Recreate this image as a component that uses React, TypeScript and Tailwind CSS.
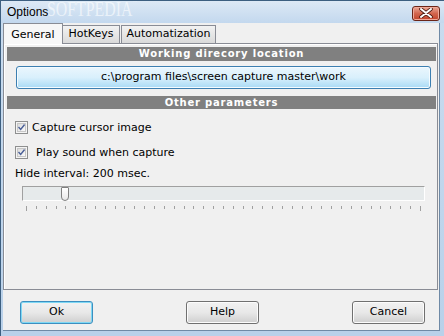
import React from "react";

function Check() {
  return (
    <div className="w-[13px] h-[13px] border border-[#8e8f8f] bg-[#f4f4f4] flex items-center justify-center shrink-0">
      <div className="w-[9px] h-[9px] border border-[#c7c7c7] bg-gradient-to-br from-[#dcdcdc] to-[#fafafa] flex items-center justify-center">
        <svg width="9" height="9" viewBox="0 0 9 9">
          <path d="M1.2 4.6 L3.4 7 L7.9 1.4" fill="none" stroke="#4a5f97" strokeWidth="1.8" strokeLinecap="square" />
        </svg>
      </div>
    </div>
  );
}

function Btn({ label, focus }: { label: string; focus?: boolean }) {
  return (
    <div
      className={
        "w-[73px] h-[23px] rounded-[3px] border flex items-center justify-center text-[11px] text-black " +
        (focus
          ? "border-[#3c8fc0] shadow-[inset_0_0_0_1px_#7fd8f4] bg-gradient-to-b from-[#f2f2f2] via-[#e8e8e8] to-[#cfcfcf]"
          : "border-[#707070] shadow-[inset_0_0_0_1px_#fcfcfc] bg-gradient-to-b from-[#f2f2f2] via-[#e8e8e8] to-[#cfcfcf]")
      }
    >
      {label}
    </div>
  );
}

export default function App() {
  const ticks = Array.from({ length: 41 }, (_, i) => i);
  return (
    <div className="w-[444px] h-[336px] relative overflow-hidden bg-gradient-to-b from-[#c9dcef] to-[#b9d1ea] border-l border-t border-[#3d5f80] flex flex-col font-['DejaVu_Sans',sans-serif] text-black">
      {/* title bar */}
      <div className="h-[22px] flex items-center pl-[6px] pr-[4px] bg-gradient-to-b from-[#dde9f5] to-[#c3d8ee] relative">
        <span className="text-[12px] font-['Liberation_Sans',sans-serif] text-black leading-none relative z-10">Options</span>
        <div className="absolute left-[46px] top-[-3px] origin-left scale-x-[0.72] text-[22px] font-['Liberation_Serif',serif] text-white/60 leading-none select-none whitespace-nowrap">
          SOFTPEDIA<span className="text-[6px] align-top">™</span>
        </div>
        <div className="ml-auto mt-[2px] w-[28px] h-[15px] rounded-[3px] border border-[#6a2518] bg-gradient-to-b from-[#e9a797] via-[#d2654e] to-[#c0422a] shadow-[inset_0_0_0_1px_#efa99a] flex items-center justify-center">
          <svg width="14" height="10" viewBox="0 0 14 10">
            <path d="M2 1 L12 9 M12 1 L2 9" stroke="#4a1a12" strokeWidth="3.6" strokeLinecap="round" />
            <path d="M2 1 L12 9 M12 1 L2 9" stroke="#ffffff" strokeWidth="2" strokeLinecap="round" />
          </svg>
        </div>
      </div>

      {/* client */}
      <div className="flex-1 flex pl-[2px] pr-[4px] pb-[5px]">
        <div className="flex-1 bg-[#f0f0f0] border-b border-r border-[#6f8aa6] flex flex-col pr-[1px] relative">
          {/* tabs */}
          <div className="h-[20px] flex items-end relative z-10">
            <div className="h-[21px] w-[60px] border border-b-0 border-[#898c95] bg-[#f7f7f7] -mb-px flex items-start justify-center pt-[3px] text-[11px]">
              General
            </div>
            <div className="h-[18px] w-[57px] border border-l-0 border-b-0 border-[#898c95] bg-gradient-to-b from-[#f2f2f2] to-[#dadada] flex items-center justify-center text-[11px]">
              HotKeys
            </div>
            <div className="h-[18px] w-[95px] ml-[1px] border border-b-0 border-[#898c95] bg-gradient-to-b from-[#f2f2f2] to-[#dadada] flex items-center justify-center text-[11px]">
              Automatization
            </div>
          </div>

          {/* panel */}
          <div className="h-[247px] border border-[#898c95] bg-[#f0f0f0] shadow-[inset_1px_1px_0_#ffffff] flex flex-col pt-[3px] pl-[3px] pr-[1px]">
            <div className="h-[14px] bg-[#808080] flex items-center justify-center text-white font-bold text-[10px] tracking-[0.8px] leading-none">
              Working direcory location
            </div>
            <div className="mt-[5px] ml-[9px] w-[415px] h-[23px] rounded-[3px] border border-[#3c7fb1] shadow-[inset_0_0_0_1px_#f4fbff] bg-gradient-to-b from-[#eaf6fd] via-[#d9f0fc] to-[#a8daf5] flex items-center justify-center text-[11px]">
              c:\program files\screen capture master\work
            </div>
            <div className="mt-[7px] h-[13px] bg-[#808080] flex items-center justify-center text-white font-bold text-[10px] tracking-[0.8px] leading-none">
              Other parameters
            </div>

            <div className="mt-[12px] ml-[8px] h-[13px] flex items-center">
              <Check />
              <span className="ml-[4px] text-[11px] leading-none">Capture cursor image</span>
            </div>
            <div className="mt-[12px] ml-[8px] h-[13px] flex items-center">
              <Check />
              <span className="ml-[8px] text-[11px] leading-none">Play sound when capture</span>
            </div>
            <div className="mt-[8px] ml-[8px] h-[13px] flex items-center text-[11px] leading-none">
              Hide interval: 200 msec.
            </div>

            <div className="mt-[6px] ml-[15px] w-[403px] h-[15px] relative border-t border-l border-[#a0a0a0] border-b border-r border-b-white border-r-white bg-[#e6eaeb]">
              <div className="absolute left-[38px] top-[0px] w-[8px] h-[14px] border border-[#808080] rounded-b-[4px] rounded-t-[1px] bg-gradient-to-b from-[#ffffff] to-[#e8e8e8]" />
            </div>
            <div className="mt-[5px] ml-[19px] w-[395px] flex justify-between items-start">
              {ticks.map((i) => (
                <div
                  key={i}
                  className={"w-px bg-[#a0a0a0] " + (i === 0 || i === 40 ? "h-[5px]" : "h-[3px]")}
                />
              ))}
            </div>
          </div>

          {/* buttons */}
          <div className="mt-[11px] ml-[17px] flex gap-[93px]">
            <Btn label="Ok" focus />
            <Btn label="Help" />
            <Btn label="Cancel" />
          </div>
        </div>
      </div>
    </div>
  );
}
